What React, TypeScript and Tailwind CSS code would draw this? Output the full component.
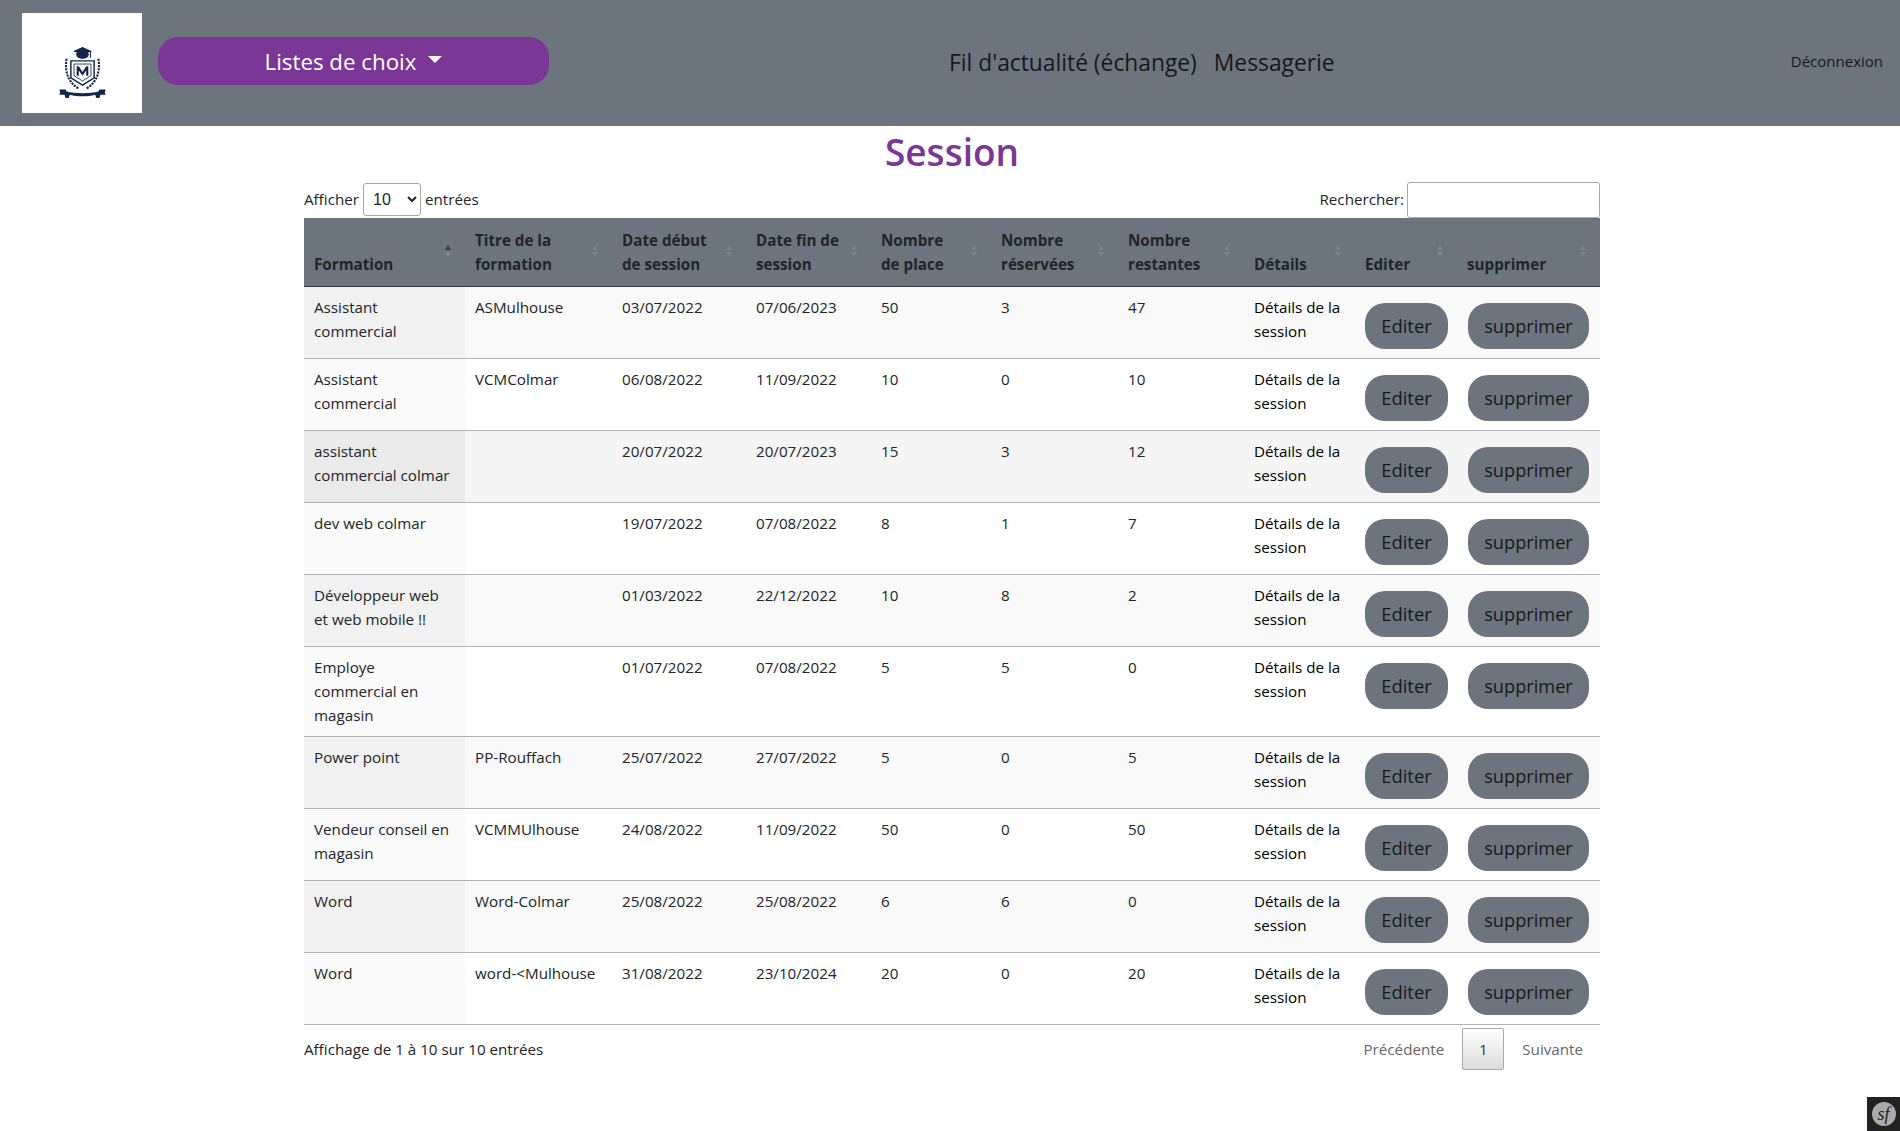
const sessions = [
  { formation: 'Assistant commercial', titre: 'ASMulhouse', debut: '03/07/2022', fin: '07/06/2023', places: '50', reservees: '3', restantes: '47' },
  { formation: 'Assistant commercial', titre: 'VCMColmar', debut: '06/08/2022', fin: '11/09/2022', places: '10', reservees: '0', restantes: '10' },
  { formation: 'assistant commercial colmar', titre: '', debut: '20/07/2022', fin: '20/07/2023', places: '15', reservees: '3', restantes: '12' },
  { formation: 'dev web colmar', titre: '', debut: '19/07/2022', fin: '07/08/2022', places: '8', reservees: '1', restantes: '7' },
  { formation: 'Développeur web et web mobile !!', titre: '', debut: '01/03/2022', fin: '22/12/2022', places: '10', reservees: '8', restantes: '2' },
  { formation: 'Employe commercial en magasin', titre: '', debut: '01/07/2022', fin: '07/08/2022', places: '5', reservees: '5', restantes: '0' },
  { formation: 'Power point', titre: 'PP-Rouffach', debut: '25/07/2022', fin: '27/07/2022', places: '5', reservees: '0', restantes: '5' },
  { formation: 'Vendeur conseil en magasin', titre: 'VCMMUlhouse', debut: '24/08/2022', fin: '11/09/2022', places: '50', reservees: '0', restantes: '50' },
  { formation: 'Word', titre: 'Word-Colmar', debut: '25/08/2022', fin: '25/08/2022', places: '6', reservees: '6', restantes: '0' },
  { formation: 'Word', titre: 'word-<Mulhouse', debut: '31/08/2022', fin: '23/10/2024', places: '20', reservees: '0', restantes: '20' },
];

function SortIcon({ active }: { active?: boolean }) {
  return (
    <svg viewBox="0 0 8 14" className="absolute right-[13px] top-[26px] w-[8px] h-[14px]">
      <path d="M4 1 L7 6 L1 6 Z" fill={active ? '#343a40' : '#7c858d'} />
      <path d="M4 13 L7 8 L1 8 Z" fill="#7c858d" />
    </svg>
  );
}

function Logo() {
  return (
    <svg viewBox="0 0 46 52" className="w-[49px] h-[55px] mt-[19px]" fill="#12284b">
      <path d="M14 6 L23 2 L32 6 L23 9 Z" />
      <ellipse cx="23" cy="9" rx="6" ry="4" />
      <rect x="30" y="6" width="1" height="6" />
      <path d="M12 15 H34 V31 L23 38 L12 31 Z" fill="none" stroke="#12284b" strokeWidth="1.4" />
      <path d="M15 18 H31 V29 L23 34 L15 29 Z" fill="none" stroke="#12284b" strokeWidth="0.8" />
      <path d="M17.5 29 V20 H19.5 L23 25.5 L26.5 20 H28.5 V29 H26.5 V24 L23 29 L19.5 24 V29 Z" />
      <path d="M8 13 C6 24 9 35 19 41" fill="none" stroke="#12284b" strokeWidth="2" strokeDasharray="2 1" />
      <path d="M38 13 C40 24 37 35 27 41" fill="none" stroke="#12284b" strokeWidth="2" strokeDasharray="2 1" />
      <path d="M1 42 H7 L8 44 C16 46 30 46 38 44 L39 42 H45 L44 45 L45 47 H40 L39 50 H36 L35 47 C28 49 18 49 11 47 L10 50 H7 L6 47 H1 L2 45 Z" />
    </svg>
  );
}

export default function App() {
  const headers = [
    { label: ['Formation'], w: 'w-[161px]', active: true },
    { label: ['Titre de la', 'formation'], w: 'w-[147px]' },
    { label: ['Date début', 'de session'], w: 'w-[134px]' },
    { label: ['Date fin de', 'session'], w: 'w-[125px]' },
    { label: ['Nombre', 'de place'], w: 'w-[120px]' },
    { label: ['Nombre', 'réservées'], w: 'w-[127px]' },
    { label: ['Nombre', 'restantes'], w: 'w-[126px]' },
    { label: ['Détails'], w: 'w-[111px]' },
    { label: ['Editer'], w: 'w-[102px]' },
    { label: ['supprimer'], w: 'w-[143px]' },
  ];

  return (
    <div className="min-h-[1131px] bg-white text-[#212529] font-['Open_Sans',sans-serif] relative">
      <header className="h-[126px] bg-[#6c757d] flex items-center pl-[22px] pr-[17px]">
        <div className="w-[120px] h-[100px] bg-white flex items-center justify-center">
          <Logo />
        </div>
        <button className="ml-[16px] mb-[4px] pt-[2px] w-[391px] h-[48px] rounded-[20px] bg-[#7a3796] text-white text-[22.3px] flex items-center justify-center">
          Listes de choix
          <span className="ml-[12px] mb-[6px] border-x-[7px] border-x-transparent border-t-[7px] border-t-white" />
        </button>
        <nav className="ml-[400px] flex gap-[17px] text-[22.8px] text-[#16191c]">
          <a>Fil d'actualité (échange)</a>
          <a>Messagerie</a>
        </nav>
        <a className="ml-auto text-[15px] text-[#16191c] mb-[3px]">Déconnexion</a>
      </header>

      <main className="w-[1296px] ml-[304px]">
        <h1 className="text-[37px] leading-[48px] mt-[2px] text-center font-semibold text-[#7a3796]">Session</h1>
        <div className="flex items-center justify-between h-[38px] mt-[4px] text-[15.2px]">
          <label className="flex items-center">
            Afficher
            <select className="mx-[4px] w-[58px] h-[33px] border border-[#aaa] rounded-[3px] bg-white pl-[5px] font-['Liberation_Sans',sans-serif] text-[16px]">
              <option>10</option>
            </select>
            entrées
          </label>
          <label className="flex items-center">
            Rechercher:
            <input className="ml-[3px] w-[193px] h-[36px] mt-[1px] border border-[#aaa] rounded-[3px] bg-white" />
          </label>
        </div>
        <table className="w-[1296px] table-fixed border-collapse text-[15.2px] leading-[24px]">
          <thead>
            <tr className="bg-[#6c757d] border-b border-[#343a40]">
              {headers.map((h) => (
                <th key={h.label[0]} className={`${h.w} relative text-left align-bottom font-bold px-[10px] pt-[10px] pb-[10px]`}>
                  {h.label.map((l) => (
                    <div key={l}>{l}</div>
                  ))}
                  <SortIcon active={h.active} />
                </th>
              ))}
            </tr>
          </thead>
          <tbody>
            {sessions.map((s, i) => (
              <tr key={i} className={`border-b border-[#b4b4b4] align-top ${i === 2 ? 'bg-[#f5f5f5]' : i % 2 === 0 ? 'bg-[#f9f9f9]' : 'bg-white'}`}>
                <td className={`px-[10px] pt-[8px] pb-[9px] ${i === 2 ? 'bg-[#eaeaea]' : i % 2 === 0 ? 'bg-[#f1f1f1]' : 'bg-[#fafafa]'}`}>{s.formation}</td>
                <td className="px-[10px] pt-[8px] pb-[9px]">{s.titre}</td>
                <td className="px-[10px] pt-[8px] pb-[9px]">{s.debut}</td>
                <td className="px-[10px] pt-[8px] pb-[9px]">{s.fin}</td>
                <td className="px-[10px] pt-[8px] pb-[9px]">{s.places}</td>
                <td className="px-[10px] pt-[8px] pb-[9px]">{s.reservees}</td>
                <td className="px-[10px] pt-[8px] pb-[9px]">{s.restantes}</td>
                <td className="px-[10px] pt-[8px] pb-[9px] text-black">Détails de la session</td>
                <td className="px-[10px] pt-[8px] pb-[9px]">
                  <button className="mt-[8px] w-[83px] h-[46px] rounded-[20px] bg-[#6c757d] text-[18.4px] text-[#16191c]">Editer</button>
                </td>
                <td className="px-[10px] pt-[8px] pb-[9px]">
                  <button className="mt-[8px] ml-[1px] w-[121px] h-[46px] rounded-[20px] bg-[#6c757d] text-[18.2px] text-[#16191c]">supprimer</button>
                </td>
              </tr>
            ))}
          </tbody>
        </table>
        <div className="flex items-center justify-between mt-[3px] text-[15.2px]">
          <span>Affichage de 1 à 10 sur 10 entrées</span>
          <div className="flex items-center text-[#666] pr-[17px]">
            <a>Précédente</a>
            <a className="mx-[18px] w-[42px] h-[42px] flex items-center justify-center border border-[#aaa] rounded-[2px] bg-gradient-to-b from-white to-[#dcdcdc] text-[#333]">1</a>
            <a>Suivante</a>
          </div>
        </div>
      </main>

      <div className="absolute right-0 bottom-0 w-[33px] h-[34px] bg-[#222] flex items-center justify-center">
        <span className="w-[24px] h-[24px] rounded-full bg-[#aaa] text-[#222] flex items-center justify-center italic font-['Liberation_Serif',serif] text-[18px] leading-none">sf</span>
      </div>
    </div>
  );
}
